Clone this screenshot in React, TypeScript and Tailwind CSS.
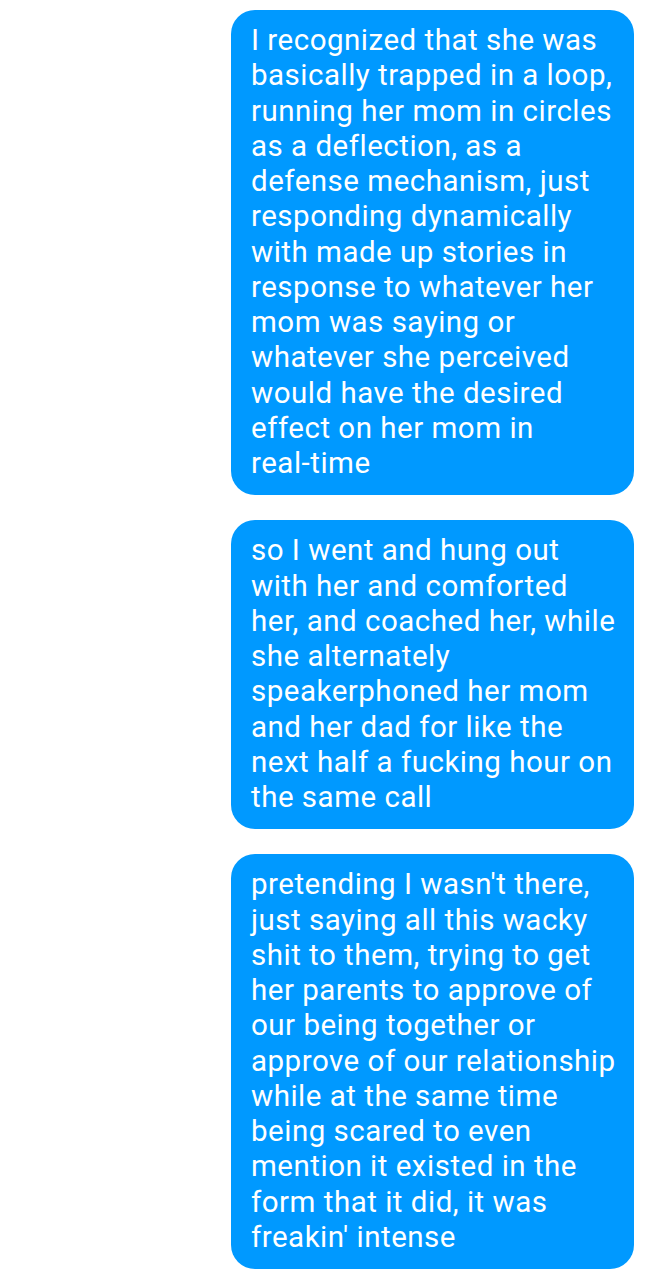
const messages: string[][] = [
  [
    'I recognized that she was',
    'basically trapped in a loop,',
    'running her mom in circles',
    'as a deflection, as a',
    'defense mechanism, just',
    'responding dynamically',
    'with made up stories in',
    'response to whatever her',
    'mom was saying or',
    'whatever she perceived',
    'would have the desired',
    'effect on her mom in',
    'real-time',
  ],
  [
    'so I went and hung out',
    'with her and comforted',
    'her, and coached her, while',
    'she alternately',
    'speakerphoned her mom',
    'and her dad for like the',
    'next half a fucking hour on',
    'the same call',
  ],
  [
    "pretending I wasn't there,",
    'just saying all this wacky',
    'shit to them, trying to get',
    'her parents to approve of',
    'our being together or',
    'approve of our relationship',
    'while at the same time',
    'being scared to even',
    'mention it existed in the',
    'form that it did, it was',
    "freakin' intense",
  ],
];

const App = () => {
  return (
    <div
      className="min-h-[1280px] w-full bg-white pt-[10px] pr-[14px]"
      style={{ fontFamily: 'Roboto, "Noto Sans", sans-serif' }}
    >
      <div className="flex flex-col items-end gap-[25px]">
        {messages.map((lines, i) => (
          <div
            key={i}
            className="w-[403px] rounded-[24px] bg-[#0099ff] px-5 pt-[13px] pb-[14px] text-[29.5px] leading-[35.25px] tracking-[0.5px] text-white"
          >
            {lines.map((line, j) => (
              <div key={j} className="whitespace-nowrap">
                {line}
              </div>
            ))}
          </div>
        ))}
      </div>
    </div>
  );
};

export default App;
